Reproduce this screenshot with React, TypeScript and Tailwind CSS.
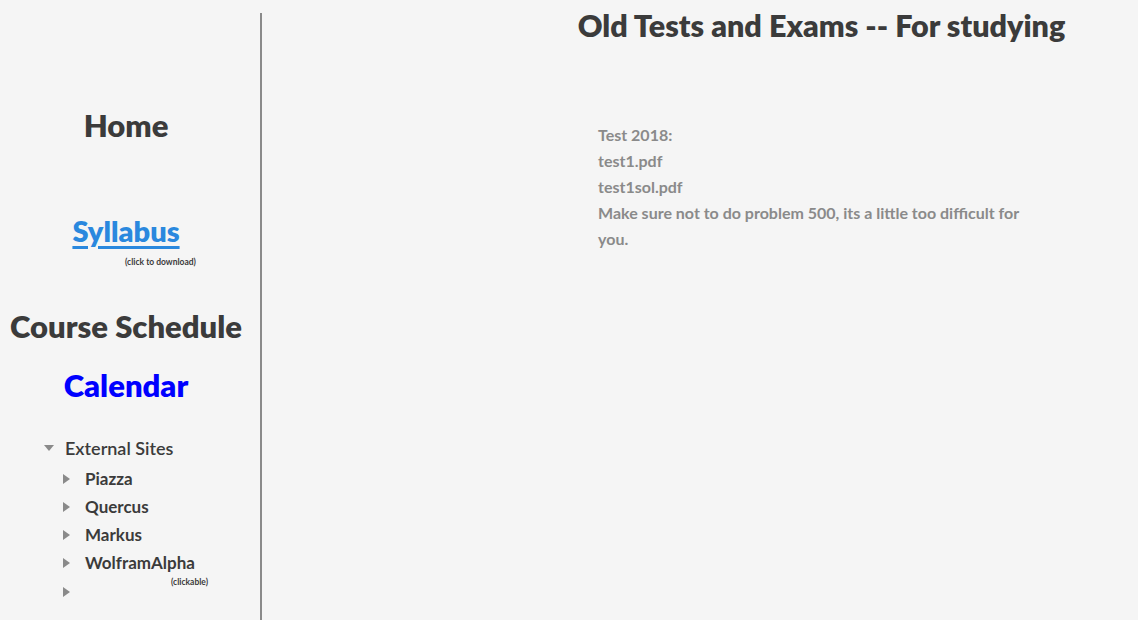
import React from "react";

const Tri = ({ down }: { down?: boolean }) =>
  down ? (
    <svg width="10" height="7" viewBox="0 0 10 7" className="shrink-0">
      <polygon points="0,0 10,0 5,6" fill="#8a8a8a" />
    </svg>
  ) : (
    <svg width="8" height="10" viewBox="0 0 8 10" className="shrink-0">
      <polygon points="0,0 7,5 0,10" fill="#8a8a8a" />
    </svg>
  );

const Child = ({ label, first }: { label: string; first?: boolean }) => (
  <div className={first ? "flex items-center h-[28px] pl-[63px] mt-[3px]" : "flex items-center h-[28px] pl-[63px]"}>
    <Tri />
    <span className="ml-[14px] text-[17px] font-bold text-[#3b3b3b]">{label}</span>
  </div>
);

export default function App() {
  return (
    <div
      className="min-h-[620px] w-full bg-[#f5f5f5] flex overflow-hidden"
      style={{ fontFamily: 'Lato, "Open Sans", sans-serif' }}
    >
      <aside className="w-[262px] shrink-0 mt-[13px] border-r-[2px] border-[#8a8a8a] h-[607px] flex flex-col">
        <div className="mt-[92px] w-[252px] text-center text-[31px] leading-[40px] font-extrabold text-[#3b3b3b]">
          Home
        </div>
        <div className="mt-[68px] w-[252px] text-center text-[29px] leading-[36px]">
          <a className="font-extrabold text-[#2a88de] underline underline-offset-[4px] decoration-[3px]">
            Syllabus
          </a>
        </div>
        <div className="mt-[8px] pl-[125px] text-[8.5px] leading-[10px] font-bold text-[#3b3b3b]">
          (click to download)
        </div>
        <div className="mt-[39px] w-[252px] text-center text-[31px] leading-[40px] font-extrabold text-[#3b3b3b] whitespace-nowrap">
          Course Schedule
        </div>
        <div className="mt-[19px] w-[252px] text-center text-[31px] leading-[40px] font-extrabold text-[#0000ff]">
          Calendar
        </div>
        <div className="mt-[29px] flex items-center h-[28px] pl-[44px]">
          <Tri down />
          <span className="ml-[11px] text-[18px] font-semibold text-[#3b3b3b]">External Sites</span>
        </div>
        <Child label="Piazza" first />
        <Child label="Quercus" />
        <Child label="Markus" />
        <Child label="WolframAlpha" />
        <div className="flex items-start h-[28px] pl-[63px]">
          <div className="mt-[10px]">
            <Tri />
          </div>
          <span className="ml-[100px] text-[8.5px] leading-[10px] font-bold text-[#3b3b3b]">
            (clickable)
          </span>
        </div>
      </aside>
      <main className="flex-1 flex flex-col">
        <h1 className="mt-[5px] pl-[243px] text-center text-[30.5px] leading-[40px] font-extrabold text-[#3b3b3b] whitespace-nowrap">
          Old Tests and Exams -- For studying
        </h1>
        <div className="mt-[77px] pl-[336px] text-[16px] leading-[26px] font-bold text-[#8a8a8a]">
          <div>Test 2018:</div>
          <div>test1.pdf</div>
          <div>test1sol.pdf</div>
          <div className="whitespace-nowrap">Make sure not to do problem 500, its a little too difficult for</div>
          <div>you.</div>
        </div>
      </main>
    </div>
  );
}
